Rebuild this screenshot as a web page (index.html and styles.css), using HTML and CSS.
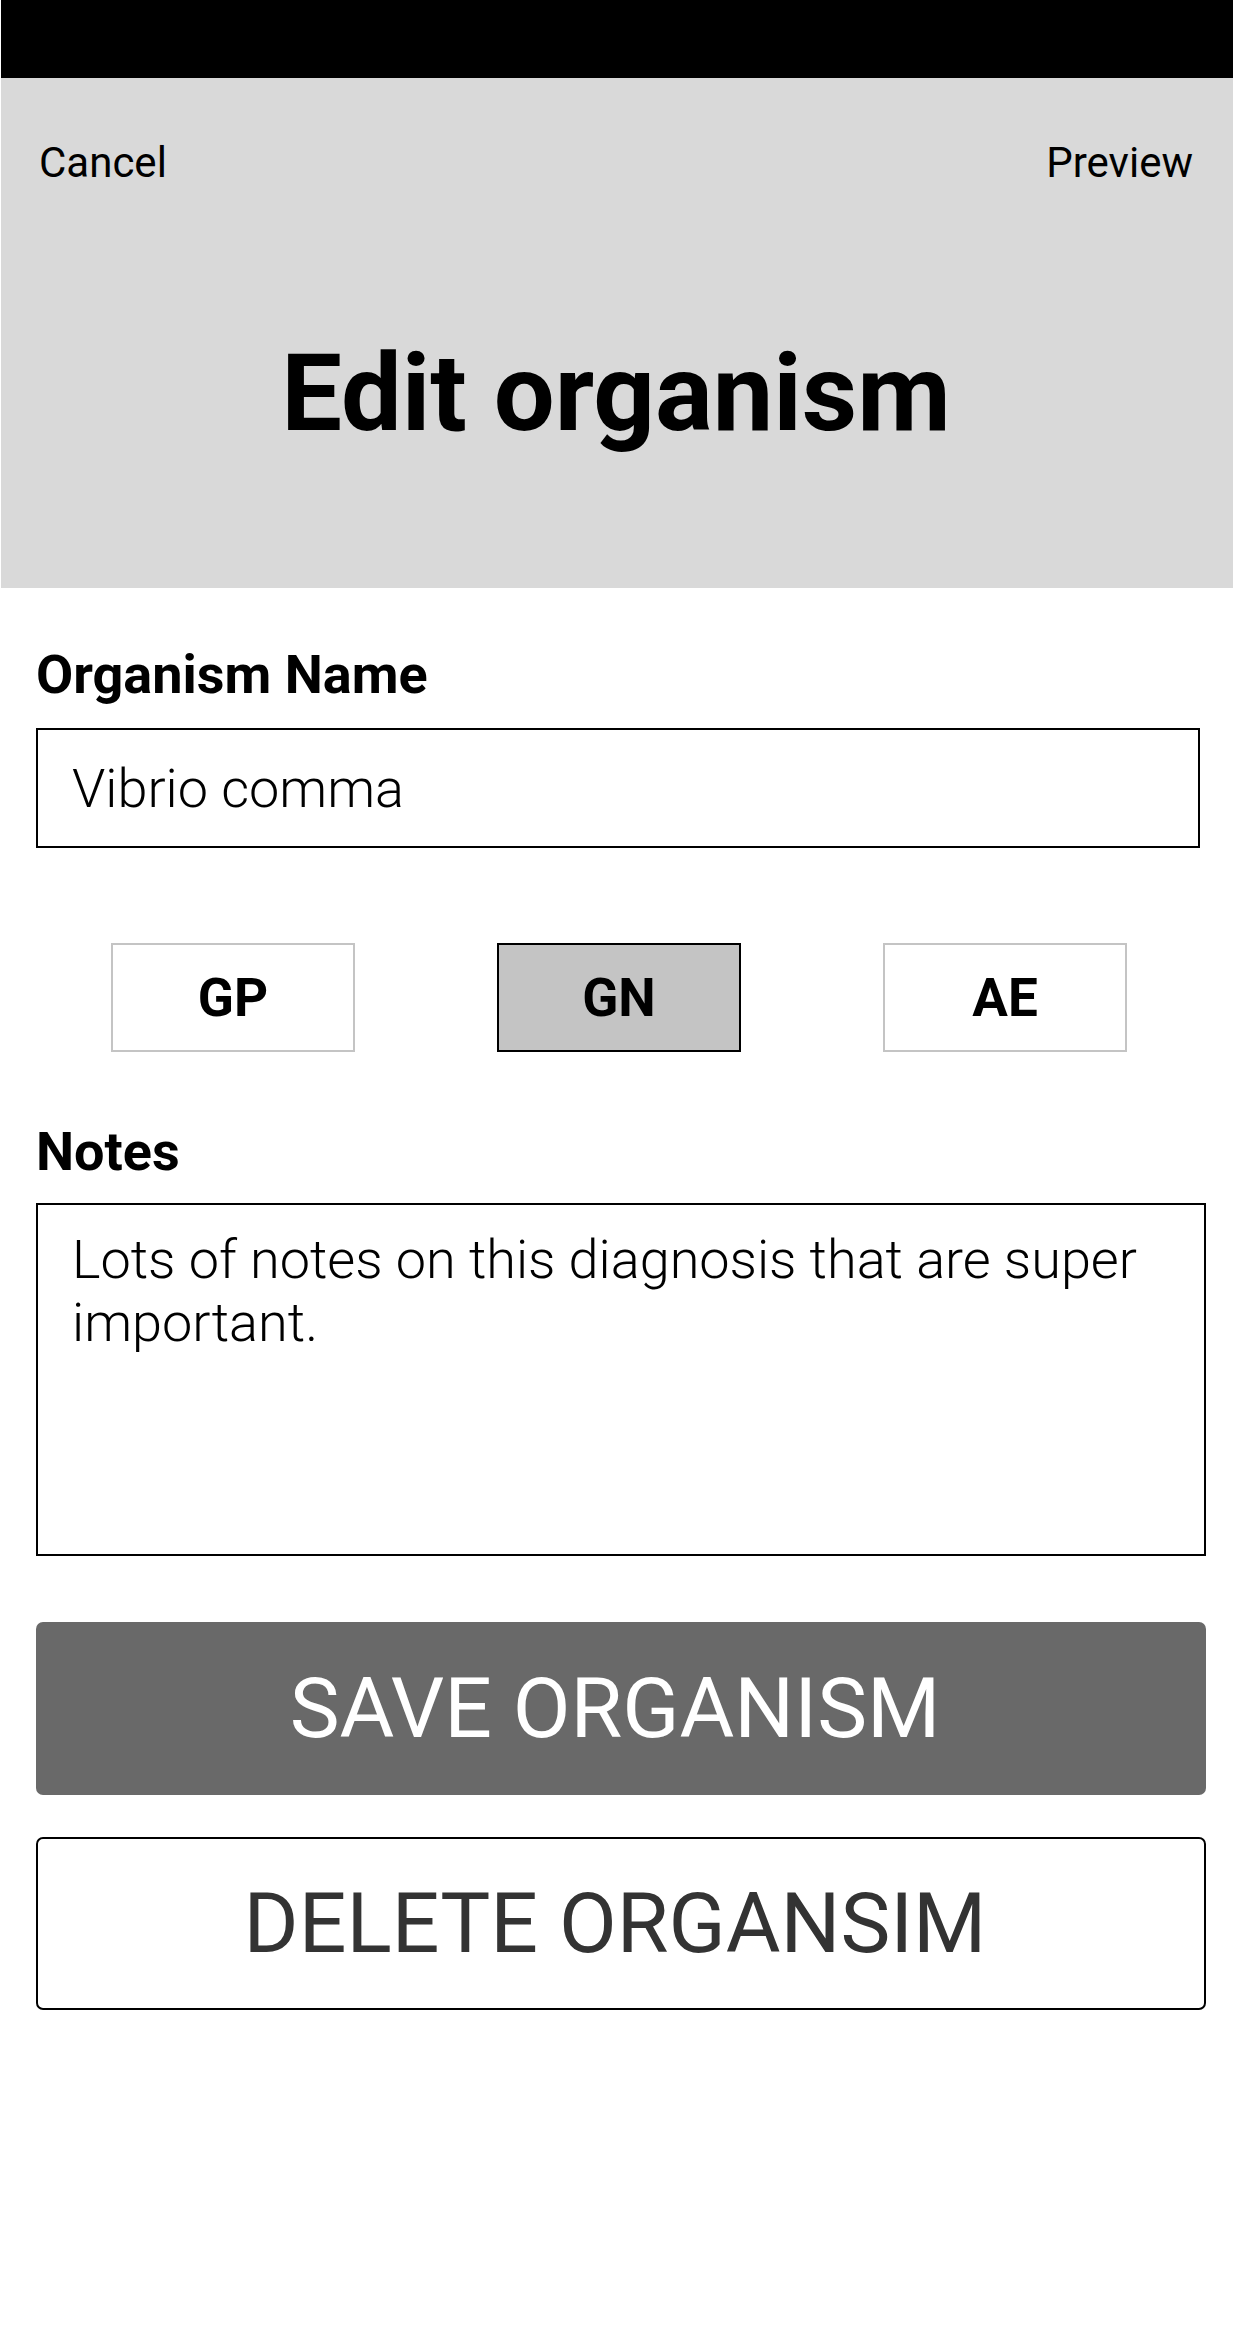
FILE: index.html
```html
<!DOCTYPE html>
<html lang="en">
<head>
<meta charset="utf-8">
<title>Edit organism</title>
<link rel="stylesheet" href="styles.css">
</head>
<body>
<div class="app">
  <div class="status-bar"></div>
  <header class="header">
    <nav class="nav">
      <span class="nav-link">Cancel</span>
      <span class="nav-link">Preview</span>
    </nav>
    <h1 class="title">Edit organism</h1>
  </header>
  <main class="form">
    <label class="label label-name" for="name">Organism Name</label>
    <input class="field" id="name" type="text" value="Vibrio comma">
    <div class="toggles">
      <div class="toggle">GP</div>
      <div class="toggle toggle-active">GN</div>
      <div class="toggle">AE</div>
    </div>
    <label class="label label-notes" for="notes">Notes</label>
    <textarea class="notes" id="notes">Lots of notes on this diagnosis that are super important.</textarea>
    <div class="btn btn-save">SAVE ORGANISM</div>
    <div class="btn btn-delete">DELETE ORGANSIM</div>
  </main>
</div>
</body>
</html>
```

FILE: styles.css
```css
html, body {
  margin: 0;
  padding: 0;
  background: #ffffff;
}

body {
  font-family: Roboto, "Liberation Sans", sans-serif;
  color: #000000;
}

.app {
  width: 1232px;
  margin-left: 1px;
  min-height: 2343px;
  background: #ffffff;
}

.status-bar {
  height: 78px;
  background: #000000;
}

.header {
  height: 510px;
  box-sizing: border-box;
  background: #d9d9d9;
  padding: 60px 40px 0 38px;
}

.nav {
  display: flex;
  justify-content: space-between;
  align-items: center;
  height: 50px;
}

.nav-link {
  font-size: 42px;
  line-height: 50px;
  font-weight: 400;
}

.title {
  margin: 140px 0 0;
  font-size: 108px;
  line-height: 130px;
  font-weight: 700;
  text-align: center;
}

.form {
  display: flex;
  flex-direction: column;
  align-items: flex-start;
  padding: 0 0 0 35px;
}

.label {
  display: block;
  font-size: 54px;
  line-height: 62px;
  font-weight: 700;
}

.label-name {
  margin-top: 56px;
}

.field {
  display: block;
  box-sizing: border-box;
  width: 1164px;
  height: 120px;
  margin: 22px 0 0;
  padding: 0 34px;
  border: 2px solid #000000;
  border-radius: 0;
  outline: none;
  background: #ffffff;
  font-family: Roboto, "Liberation Sans", sans-serif;
  font-size: 54px;
  font-weight: 300;
  color: #000000;
}

.toggles {
  display: flex;
  gap: 142px;
  margin: 95px 0 0 75px;
}

.toggle {
  box-sizing: border-box;
  width: 244px;
  height: 109px;
  border: 2px solid #c4c4c4;
  background: #ffffff;
  display: flex;
  align-items: center;
  justify-content: center;
  font-size: 53px;
  line-height: 62px;
  font-weight: 700;
}

.toggle-active {
  background: #c4c4c4;
  border-color: #000000;
}

.label-notes {
  margin-top: 69px;
}

.notes {
  display: block;
  box-sizing: border-box;
  width: 1170px;
  height: 353px;
  margin: 20px 0 0;
  padding: 23px 34px;
  border: 2px solid #000000;
  border-radius: 0;
  outline: none;
  resize: none;
  overflow: hidden;
  background: #ffffff;
  font-family: Roboto, "Liberation Sans", sans-serif;
  font-size: 54px;
  line-height: 63px;
  font-weight: 300;
  color: #000000;
}

.btn {
  box-sizing: border-box;
  width: 1170px;
  height: 173px;
  padding-right: 12px;
  border-radius: 7px;
  display: flex;
  align-items: center;
  justify-content: center;
  font-weight: 400;
  font-size: 84px;
}

.btn-save {
  margin-top: 66px;
  background: #696969;
  color: #ffffff;
}

.btn-delete {
  margin-top: 42px;
  border: 2px solid #000000;
  background: #ffffff;
  color: #333333;
}
```
